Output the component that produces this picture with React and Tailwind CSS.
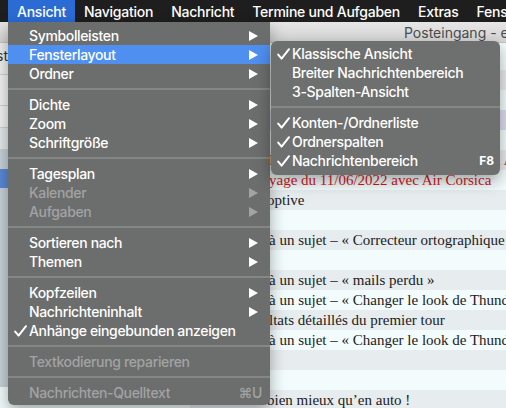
import React from 'react';
import clsx from 'clsx';

const topMenus = ['Ansicht', 'Navigation', 'Nachricht', 'Termine und Aufgaben', 'Extras', 'Fenster', 'Hilfe'];

const viewMenu = [
  [
    { label: 'Symbolleisten', arrow: true },
    { label: 'Fensterlayout', arrow: true, active: true },
    { label: 'Ordner', arrow: true },
  ],
  [
    { label: 'Dichte', arrow: true },
    { label: 'Zoom', arrow: true },
    { label: 'Schriftgröße', arrow: true },
  ],
  [
    { label: 'Tagesplan', arrow: true },
    { label: 'Kalender', arrow: true, disabled: true },
    { label: 'Aufgaben', arrow: true, disabled: true },
  ],
  [
    { label: 'Sortieren nach', arrow: true },
    { label: 'Themen', arrow: true },
  ],
  [
    { label: 'Kopfzeilen', arrow: true },
    { label: 'Nachrichteninhalt', arrow: true },
    { label: 'Anhänge eingebunden anzeigen', check: true },
  ],
  [{ label: 'Textkodierung reparieren', disabled: true }],
  [{ label: 'Nachrichten-Quelltext', disabled: true, shortcut: '⌘U' }],
];

const layoutMenu = [
  [
    { label: 'Klassische Ansicht', check: true },
    { label: 'Breiter Nachrichtenbereich' },
    { label: '3-Spalten-Ansicht' },
  ],
  [
    { label: 'Konten-/Ordnerliste', check: true },
    { label: 'Ordnerspalten', check: true },
    { label: 'Nachrichtenbereich', check: true, shortcut: 'F8', bold: true },
  ],
];

// message list, one entry per 20px row
const rows = [
  { text: '' },
  { text: '' },
  { text: '' },
  { text: '', selected: true },
  { text: '' },
  { text: 'Informations importantes sur votre vol AF75 test', red: true },
  { text: 'yage du 11/06/2022 avec Air Corsica', red: true },
  { text: 'optive', shift: true },
  { text: '' },
  { text: 'à un sujet – « Correcteur ortographique »' },
  { text: '' },
  { text: 'à un sujet – « mails perdu »' },
  { text: 'à un sujet – « Changer le look de Thunderbird »' },
  { text: 'ltats détaillés du premier tour' },
  { text: 'à un sujet – « Changer le look de Thunderbird »' },
  { text: '' },
  { text: '' },
  { text: 'bien mieux qu’en auto !', shift: true },
];

function Check() {
  return (
    <svg width="13" height="12" viewBox="0 0 13 12" fill="none">
      <path d="M1.2 6.6 L4.6 10.6 L12 1.2" stroke="currentColor" strokeWidth="2" strokeLinecap="round" strokeLinejoin="round" />
    </svg>
  );
}

function Arrow() {
  return (
    <svg width="9" height="10" viewBox="0 0 9 10">
      <polygon points="0,0 9,5 0,10" fill="currentColor" />
    </svg>
  );
}

function MenuItem({ item }) {
  return (
    <div
      className={clsx(
        'flex items-center h-[19px]',
        item.shortcut ? (item.bold ? 'pr-[6px]' : 'pr-[8px]') : 'pr-[12px]',
        item.active && 'bg-[#4f8ff0]',
        item.disabled ? 'text-[#a2a3a3]' : 'text-white'
      )}
    >
      <div className="w-[21px] shrink-0 flex justify-end pr-[2px]">{item.check && <Check />}</div>
      <span className="flex-1 whitespace-nowrap">{item.label}</span>
      {item.arrow && <Arrow />}
      {item.shortcut && (
        <span className={clsx(item.bold ? 'text-[12px] font-bold tracking-normal' : 'text-[14px]')}>{item.shortcut}</span>
      )}
    </div>
  );
}

function Menu({ groups, className }) {
  return (
    <div className={clsx('absolute shadow-[0_6px_16px_rgba(0,0,0,0.35)] tracking-[-0.35px]', className)}>
      {groups.map((group, i) => (
        <div key={i}>
          {i > 0 && (
            <div className="h-[12px] flex items-center">
              <div className="h-[2px] w-full bg-[#858686]" />
            </div>
          )}
          {group.map((item) => (
            <MenuItem key={item.label} item={item} />
          ))}
        </div>
      ))}
    </div>
  );
}

export default function App() {
  return (
    <div className="relative w-[506px] h-[408px] overflow-hidden bg-[#f3fcfc] font-[Inter,sans-serif] text-[14px] font-medium">
      {/* system menu bar */}
      <div className="h-[22px] bg-[#1e1e1e] flex items-center pl-[8px] text-white whitespace-nowrap tracking-[-0.25px]">
        {topMenus.map((m, i) => (
          <div
            key={m}
            className={clsx('h-full flex items-center px-[9px]', i === 0 && 'bg-[#2b6bd4]')}
          >
            {m}
          </div>
        ))}
      </div>

      {/* window title */}
      <div className="h-[21px] bg-gradient-to-b from-[#e6e6e6] to-[#d4d4d4] border-b border-[#c2c2c2] flex items-center pl-[404px] text-[#4b4b4b] font-normal whitespace-nowrap">
        Posteingang - e.bernard@example.fr
      </div>

      <div className="flex">
        {/* folder pane */}
        <div className="w-[190px] shrink-0 flex flex-col h-[344px] bg-[#c6d1d8]">
          <div className="h-[32px] bg-[#efefef] border-b border-[#cfcfcf] flex items-end pb-[8px]">
            <div className="w-[8px] overflow-hidden flex justify-end text-[#333] font-normal whitespace-nowrap">Test</div>
          </div>
          <div className="h-[31px] bg-[#f2f2f2] border-b border-[#cfcfcf]" />
          <div className="h-[22px] bg-[#f2f2f2] border-b border-[#cfcfcf]" />
          <div className="h-[21px] bg-[#e4e8ea]" />
          <div className="h-[20px]" />
          <div className="h-[19px] bg-[#5a89d6]" />
        </div>

        {/* message list */}
        <div className="flex-1 flex flex-col font-['Liberation_Serif',serif] text-[15px] font-normal">
          <div className="h-[7px] bg-[#f3fcfc]" />
          {rows.map((r, i) => (
            <div
              key={i}
              className={clsx(
                'h-[20px] flex items-center whitespace-nowrap',
                r.selected ? 'bg-[#dcdcf1]' : i % 2 === 0 ? 'bg-[#f3fcfc]' : 'bg-[#e7ecee]',
                r.red ? 'text-[#d4171c]' : 'text-[#1b1b1b]'
              )}
            >
              <div className={clsx('shrink-0', r.shift ? 'w-[77px]' : 'w-[79px]')} />
              <span>{r.text}</span>
            </div>
          ))}
        </div>
      </div>

      <Menu groups={viewMenu} className="left-[8px] top-[22px] w-[262px] pt-[4px] pb-[3px] rounded-b-[6px] bg-[#6c6d6d]" />
      <Menu groups={layoutMenu} className="left-[271px] top-[41px] w-[229px] pt-[3px] pb-[5px] rounded-[6px] bg-[#6e6f6f]" />
    </div>
  );
}
